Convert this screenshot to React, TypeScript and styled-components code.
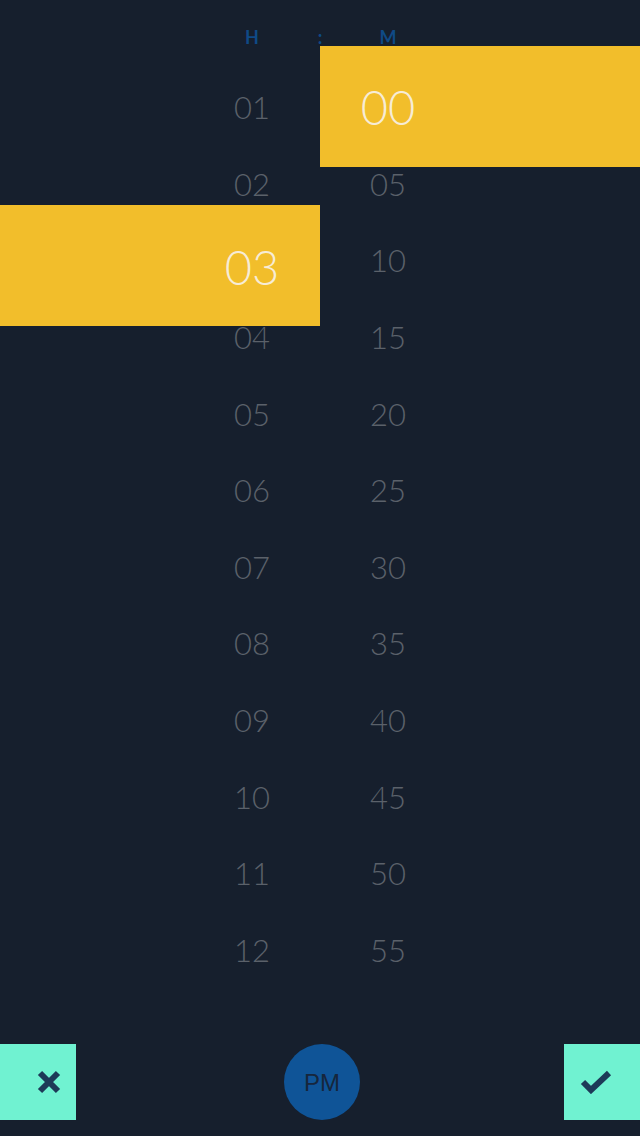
import React from "react";
import styled, { createGlobalStyle } from "styled-components";

const hours = ["01", "02", "03", "04", "05", "06", "07", "08", "09", "10", "11", "12"];
const minutes = ["00", "05", "10", "15", "20", "25", "30", "35", "40", "45", "50", "55"];

const selectedHour = "03";
const selectedMinute = "00";

const App = () => {
  return (
    <Page>
      <GlobalStyle />
      <Header>
        <HeaderCell $side="left">
          <HeaderLabel>H</HeaderLabel>
        </HeaderCell>
        <Colon>:</Colon>
        <HeaderCell $side="right">
          <HeaderLabel>M</HeaderLabel>
        </HeaderCell>
      </Header>
      <Columns>
        <Column>
          {hours.map((h) => (
            <Item key={h} $side="left">
              {h === selectedHour ? (
                <Highlight $side="left" $offset={-17}>
                  <BigLabel>{h}</BigLabel>
                </Highlight>
              ) : (
                <Label>{h}</Label>
              )}
            </Item>
          ))}
        </Column>
        <Column>
          {minutes.map((m) => (
            <Item key={m} $side="right">
              {m === selectedMinute ? (
                <Highlight $side="right" $offset={-23}>
                  <BigLabel>{m}</BigLabel>
                </Highlight>
              ) : (
                <Label>{m}</Label>
              )}
            </Item>
          ))}
        </Column>
      </Columns>
      <Footer>
        <SquareButton $side="left" aria-label="cancel">
          <svg width="24" height="24" viewBox="0 0 24 24">
            <path d="M3 3 L21 21 M21 3 L3 21" stroke="#1d3a58" strokeWidth="6" />
          </svg>
        </SquareButton>
        <PeriodButton>PM</PeriodButton>
        <SquareButton $side="right" aria-label="confirm">
          <svg width="32" height="24" viewBox="0 0 32 24">
            <path d="M3 12 L11 20 L29 3" stroke="#1d3a58" strokeWidth="6" fill="none" />
          </svg>
        </SquareButton>
      </Footer>
    </Page>
  );
};

export default App;

const GlobalStyle = createGlobalStyle`
  html, body {
    margin: 0;
    padding: 0;
    background: #161f2d;
  }
  * {
    box-sizing: border-box;
  }
`;

const Page = styled.div`
  width: 640px;
  height: 1136px;
  background: #161f2d;
  display: flex;
  flex-direction: column;
  overflow: hidden;
  font-family: "Lato", "Liberation Sans", sans-serif;
`;

const Header = styled.div`
  display: grid;
  grid-template-columns: 1fr 0 1fr;
  height: 69px;
  padding-top: 5px;
  align-items: center;
`;

const HeaderCell = styled.div<{ $side: "left" | "right" }>`
  display: flex;
  justify-content: ${({ $side }) => ($side === "left" ? "flex-end" : "flex-start")};
  padding: ${({ $side }) => ($side === "left" ? "0 18px 0 0" : "0 0 0 18px")};
`;

const HeaderLabel = styled.span`
  width: 100px;
  text-align: center;
  color: #0f4a86;
  font-size: 18px;
  font-weight: 700;
`;

const Colon = styled.span`
  display: flex;
  justify-content: center;
  color: #0f4a86;
  font-size: 18px;
  font-weight: 700;
`;

const Columns = styled.div`
  display: grid;
  grid-template-columns: 1fr 1fr;
`;

const Column = styled.div`
  display: flex;
  flex-direction: column;
`;

const Item = styled.div<{ $side: "left" | "right" }>`
  position: relative;
  height: 76.6px;
  display: flex;
  align-items: center;
  justify-content: ${({ $side }) => ($side === "left" ? "flex-end" : "flex-start")};
  padding: ${({ $side }) => ($side === "left" ? "0 18px 0 0" : "0 0 0 18px")};
`;

const Label = styled.span`
  width: 100px;
  text-align: center;
  color: #5b616a;
  font-size: 31px;
  font-weight: 300;
`;

const Highlight = styled.div<{ $side: "left" | "right"; $offset: number }>`
  position: absolute;
  left: 0;
  right: 0;
  top: ${({ $offset }) => $offset}px;
  height: 121px;
  background: #f2be2b;
  display: flex;
  align-items: center;
  justify-content: ${({ $side }) => ($side === "left" ? "flex-end" : "flex-start")};
  padding: ${({ $side }) => ($side === "left" ? "2px 18px 0 0" : "0 0 0 18px")};
  z-index: 1;
`;

const BigLabel = styled.span`
  width: 100px;
  text-align: center;
  color: #f7ecd6;
  font-size: 47px;
  font-weight: 300;
`;

const Footer = styled.div`
  margin-top: auto;
  display: flex;
  align-items: center;
  justify-content: space-between;
  padding-bottom: 16px;
`;

const SquareButton = styled.button<{ $side: "left" | "right" }>`
  width: 76px;
  height: 76px;
  border: none;
  background: #70f2d1;
  display: flex;
  align-items: center;
  justify-content: ${({ $side }) => ($side === "left" ? "flex-end" : "flex-start")};
  padding: ${({ $side }) => ($side === "left" ? "0 15px 0 0" : "0 0 0 16px")};
`;

const PeriodButton = styled.button`
  width: 76px;
  height: 76px;
  border-radius: 50%;
  border: none;
  padding: 2px 0 0;
  margin-left: 4px;
  background: #0f5497;
  color: #16263c;
  font-family: "Liberation Sans", sans-serif;
  font-size: 24px;
`;
